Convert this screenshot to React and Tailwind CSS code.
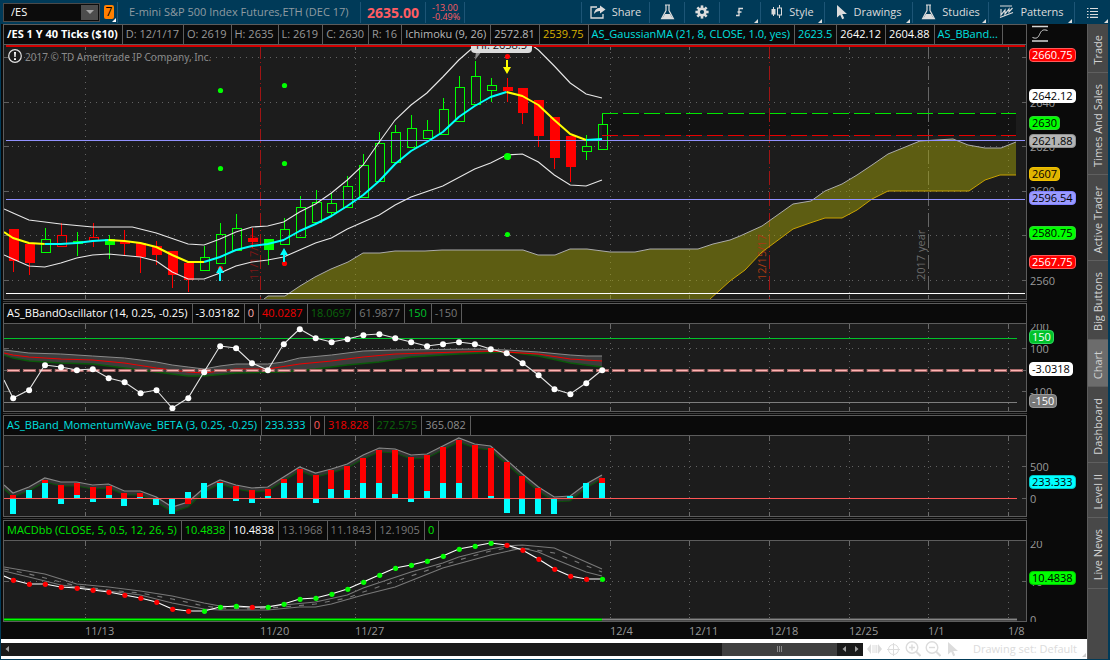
import React from "react";

const X = (i) => Math.round((13 + 15.92 * i) * 10) / 10;
const EDGE = -0.565;
const VERTICALS = [85, 260, 355, 610, 689, 769, 849, 928, 1008];

const pts = (series) => series.map(([i, y]) => `${X(i)},${y}`).join(" ");
const raw = (series) => series.map((p) => p.join(",")).join(" ");
const seq = (values, from = 0) => values.map((y, k) => [from + k, y]);

/* [kind, high, bodyTop, bodyBottom, low]; g/r = hollow, G/R = filled */
const CANDLES = [
  ["R", 229, 229, 260, 271], ["R", 244, 244, 262, 274], ["g", 228, 239, 252, 252], ["r", 223, 235, 246, 246],
  ["G", 232, 241, 243, 255], ["r", 223, 237, 240, 246], ["G", 235, 239, 244, 258], ["R", 230, 241, 243, 254],
  ["R", 243, 243, 256, 272], ["R", 241, 246, 254, 264], ["R", 251, 251, 274, 287], ["R", 263, 263, 279, 291],
  ["g", 246, 257, 270, 270], ["g", 223, 234, 263, 263], ["g", 214, 228, 250, 250], ["R", 228, 238, 241, 247],
  ["G", 239, 239, 249, 264], ["g", 218, 229, 244, 244], ["g", 196, 207, 237, 237], ["g", 190, 202, 222, 222],
  ["g", 193, 203, 212, 216], ["g", 176, 186, 207, 207], ["g", 154, 165, 197, 197], ["g", 132, 143, 181, 181],
  ["g", 125, 132, 162, 162], ["g", 115, 128, 147, 147], ["g", 120, 130, 138, 138], ["g", 98, 109, 134, 134],
  ["g", 76, 87, 121, 121], ["g", 61, 76, 104, 104], ["g", 78, 85, 90, 101], ["R", 78, 87, 90, 101],
  ["R", 88, 88, 112, 123], ["R", 100, 100, 135, 146], ["R", 117, 117, 157, 168], ["R", 136, 136, 166, 181],
  ["g", 135, 146, 151, 159], ["g", 113, 124, 149, 149],
];

const MA = [238, 243, 244, 244, 243, 241, 240, 241, 243, 247, 255, 262, 262, 257, 250, 246, 244, 240, 231, 224, 216, 206, 195, 181, 164, 151, 142, 132, 117, 106, 97, 92, 96, 105, 120, 134, 140, 139];
const UPPER = [[EDGE, 209], [0, 213], [1, 220], [3, 224], [5, 227], [7.5, 227], [9, 233], [11, 244], [12, 245], [13, 239], [14, 232], [15, 227], [16, 226], [17, 222], [18, 212], [19, 204], [20, 193], [21, 180], [22, 165], [23, 142], [24, 120], [25, 105], [26, 93], [27, 77], [28, 60], [29, 46], [30, 36], [31, 34], [32, 38], [33, 50], [34, 66], [35, 83], [36, 94], [37, 98]];
const LOWER = [[EDGE, 255], [0, 259], [1, 266], [2, 267], [3, 263], [4, 258], [5, 255], [6, 254], [8, 257], [9, 261], [10, 272], [11, 279], [12, 279], [13, 273], [14, 266], [15, 262], [16, 260], [17, 257], [18, 250], [19, 243], [20, 238], [21, 229], [22, 222], [23, 215], [24, 205], [25, 197], [27, 186], [29, 169], [30, 163], [31, 155], [32, 154], [33, 162], [34, 175], [35, 185], [36, 186], [37, 180]];
const CLOUD_TOP = [[264, 299], [268, 296], [285, 296], [300, 286], [315, 277], [331, 269], [348, 262], [363, 253], [380, 253], [395, 251], [425, 251], [442, 250], [523, 250], [538, 255], [555, 255], [570, 249], [587, 249], [610, 252], [635, 252], [650, 249], [698, 249], [713, 244], [730, 240], [740, 236], [762, 226], [793, 204], [811, 201], [825, 191], [842, 184], [857, 175], [872, 165], [888, 154], [920, 141], [953, 139], [968, 145], [985, 148], [1001, 148], [1016, 142]];
const CLOUD_BOTTOM = [[1016, 175], [1000, 175], [985, 180], [969, 191], [888, 191], [872, 199], [857, 210], [842, 218], [825, 218], [810, 223], [793, 229], [762, 252], [745, 270], [730, 281], [710, 299]];

const OSC = [398, 390, 365, 367, 370, 369, 378, 382, 393, 390, 408, 398, 372, 346, 348, 363, 370, 344, 329, 338, 342, 339, 335, 334, 338, 342, 346, 344, 342, 344, 349, 353, 363, 375, 389, 394, 383, 370];
const OSC_GRAY = [[EDGE, 350], [1, 353], [3, 354], [5, 356], [7, 358], [9, 362], [10, 365], [11, 367], [12, 369], [13, 366], [14, 364], [16, 364], [17, 362], [18, 358], [20, 355], [22, 351], [24, 350], [29, 349], [31, 350], [33, 352], [35, 355], [36, 356], [37, 356]];
const OSC_RED = [[EDGE, 353], [0, 355], [1, 357], [3, 359], [5, 360], [7, 363], [9, 368], [11, 372], [12, 373], [13, 371], [14, 369], [16, 369], [18, 364], [20, 361], [22, 357], [24, 354], [26, 353], [28, 352], [30, 351], [31, 352], [33, 354], [35, 359], [37, 361]];
const OSC_GREEN = [[EDGE, 355], [0, 358], [1, 361], [3, 363], [5, 364], [7, 368], [9, 372], [10, 374], [11, 376], [12, 376], [14, 373], [17, 372], [19, 369], [21, 365], [23, 362], [25, 357], [28, 354], [31, 352], [33, 356], [35, 363], [37, 367]];

/* [red end, cyan end]; 498 is the zero line */
const BARS = [
  [495, 514], [498, 490], [480, 483], [485, 504], [483, 495], [487, 502], [486, 495], [493, 506], [493, 497], [498, 505],
  [498, 514], [504, 492], [498, 483], [482, 483], [486, 501], [490, 503], [489, 496], [479, 483], [469, 483], [475, 503],
  [470, 489], [466, 490], [458, 483], [450, 483], [450, 494], [457, 502], [455, 491], [447, 483], [440, 483], [445, 499],
  [448, 496], [462, 513], [476, 514], [488, 514], [498, 514], [498, 496], [498, 483], [478, 483],
];
const WAVE = [493, 487, 478, 482, 482, 485, 484, 491, 491, 497, 507, 502, 488, 480, 485, 488, 487, 477, 467, 473, 469, 464, 455, 448, 449, 455, 454, 446, 438, 444, 446, 460, 474, 487, 497, 496, 484, 475];

const MACD = [580, 584, 584, 587, 588, 590, 592, 595, 598, 602, 609, 611, 611, 607, 606, 607, 607, 604, 599, 598, 594, 589, 582, 575, 568, 565, 561, 556, 549, 546, 543, 545, 550, 559, 569, 576, 579, 579];
const MACD_UP = [[EDGE, 567], [2, 574], [4, 584], [6, 587], [8, 591], [10, 596], [12, 603], [13, 606], [15, 608], [17, 605], [19, 602], [21, 595], [22, 588], [25, 572], [27, 563], [28, 557], [30, 549], [31, 546], [32, 545], [34, 548], [37, 569]];
const MACD_MID = [[EDGE, 569], [1, 574], [3, 582], [4, 586], [6, 590], [8, 593], [10, 599], [12, 606], [13, 608], [15, 609], [17, 607], [19, 604], [21, 598], [22, 592], [25, 576], [27, 565], [28, 560], [30, 551], [31, 548], [32, 548], [34, 553], [37, 572]];
const MACD_LOW = [[EDGE, 571], [1, 577], [3, 585], [5, 589], [8, 595], [10, 603], [12, 609], [13, 610], [16, 610], [18, 607], [19, 607], [20, 604], [22, 595], [24, 587], [27, 568], [30, 555], [32, 548], [33, 552], [34, 559], [36, 572], [37, 576]];
const isRed = (i) => i < 12 || i === 15 || (i > 30 && i < 37);

function Grid({ top, bottom, rows, special = {}, rowEnd = 1012 }) {
  return (
    <g shapeRendering="crispEdges" fill="none">
      {rows.map((y) => (
        <g key={y}>
          <line x1="12" x2={rowEnd} y1={y + 0.5} y2={y + 0.5} stroke="#636363" strokeDasharray="1 5" />
          <path d={`M4 ${y + 0.5}h5M1022 ${y + 0.5}h4`} stroke="#5f5f5f" />
        </g>
      ))}
      {VERTICALS.filter((x) => !special[x]).map((x) => (
        <line key={x} x1={x + 0.5} x2={x + 0.5} y1={top + 7} y2={bottom - 6} stroke="#636363" strokeDasharray="1 5" />
      ))}
      {VERTICALS.map((x) => (
        <path key={x} d={`M${x + 0.5} ${top}v5M${x + 0.5} ${bottom}v-4`} stroke="#6a6a6a" />
      ))}
      {Object.entries(special).map(([x, color]) => (
        <line key={x} x1={+x + 0.5} x2={+x + 0.5} y1={top} y2={bottom} stroke={color} strokeDasharray="14 3 1 3" />
      ))}
    </g>
  );
}

function PricePlot() {
  const ma = [[EDGE, 232], ...seq(MA)];
  const part = (a, b) => pts(ma.filter(([i]) => i >= a && i <= b));
  return (
    <svg viewBox="4 45 1022 254" preserveAspectRatio="none" className="block h-[254px] w-full bg-[#1c1c1c]" role="img" aria-label="Price chart">
      <rect x="602" y="113" width="414" height="22" fill="#121212" />
      <Grid top={45} bottom={299} rows={[57, 102, 146, 191, 235, 280]} special={{ 260: "#a01414", 769: "#a01414", 928: "#666666" }} />
      <polygon points={raw([...CLOUD_TOP, ...CLOUD_BOTTOM])} fill="#a5a509" fillOpacity="0.48" />
      <g fontFamily="'Open Sans', sans-serif" fontSize="11">
        <text transform="translate(258 280) rotate(-90)" fill="#7c1717">11/17/17</text>
        <text transform="translate(766 280) rotate(-90)" fill="#a83a12">12/15/17</text>
        <text transform="translate(925 280) rotate(-90)" fill="#6b6b6b">2017 year</text>
      </g>
      <polyline points={raw(CLOUD_TOP)} fill="none" stroke="#ababab" />
      <polyline points={raw(CLOUD_BOTTOM)} fill="none" stroke="#c9a200" />
      <g shapeRendering="crispEdges" fill="none">
        {CANDLES.map(([k, high, top, bottom, low], i) => {
          const c = k.toLowerCase() === "g" ? "#00ff00" : "#ff0000";
          const x = Math.round(X(i));
          const solid = k === "G" || k === "R";
          return (
            <g key={i}>
              <path d={`M${x + 0.5} ${high}V${top}M${x + 0.5} ${bottom}V${low + 0.5}`} stroke={c} />
              {solid ? (
                <rect x={x - 4} y={top} width="10" height={bottom - top + 1} fill={c} />
              ) : (
                <rect x={x - 3.5} y={top + 0.5} width="9" height={bottom - top} stroke={c} />
              )}
            </g>
          );
        })}
      </g>
      <g shapeRendering="crispEdges">
        <line x1="6" x2="1025" y1="140.5" y2="140.5" stroke="#9292ff" />
        <line x1="6" x2="1025" y1="199.5" y2="199.5" stroke="#9292ff" />
        <line x1="602" x2="1016" y1="113.5" y2="113.5" stroke="#00e600" strokeDasharray="16 5" />
        <line x1="602" x2="1016" y1="135.5" y2="135.5" stroke="#e60000" strokeDasharray="16 5" />
        <line x1="6" x2="1025" y1="293.5" y2="293.5" stroke="#ffffff" />
      </g>
      <polyline points={pts(UPPER)} fill="none" stroke="#e8e8e8" strokeWidth="1.1" />
      <polyline points={pts(LOWER)} fill="none" stroke="#e8e8e8" strokeWidth="1.1" />
      <g fill="none" strokeWidth="2" strokeLinejoin="round">
        <polyline points={part(-1, 2)} stroke="#ffff00" />
        <polyline points={part(2, 6)} stroke="#00ffff" />
        <polyline points={part(6, 12)} stroke="#ffff00" />
        <polyline points={part(12, 31)} stroke="#00ffff" />
        <polyline points={part(31, 36)} stroke="#ffff00" />
        <polyline points={part(36, 37)} stroke="#00ffff" />
      </g>
      <g fill="#00ff00">
        {[[220.5, 90.5, 2.6], [284.5, 85.5, 2.6], [220.5, 168.5, 2.6], [284.5, 163.5, 2.6], [507.5, 156.5, 3.6], [507.5, 234.5, 2.6]].map(([x, y, r]) => (
          <circle key={`${x}-${y}`} cx={x} cy={y} r={r} />
        ))}
      </g>
      <g fill="#ff0000">
        <circle cx="507.5" cy="56.5" r="2.6" />
        <circle cx="220.5" cy="268.5" r="2.6" />
        <circle cx="284.5" cy="263.5" r="2.6" />
      </g>
      <path d="M506 60h2v7h3l-4 7-4-7h3z" fill="#ffff00" />
      <path d="M219 281h2v-8h3l-4-7-4 7h3z" fill="#00ffff" />
      <path d="M283 262h2v-7h3l-4-7-4 7h3z" fill="#00ffff" />
      <path d="M476 51l-1 9 7-9z" fill="#8c8c8c" />
      <rect x="471" y="36" width="61" height="17" rx="4" fill="#dcdcdc" />
      <text x="476" y="49" fill="#111111" fontFamily="'Open Sans', sans-serif" fontSize="11">Hi: 2658.5</text>
      <rect x="6" y="45" width="1019" height="1" fill="#d40000" shapeRendering="crispEdges" />
      <rect x="6" y="46" width="465" height="1" fill="#d40000" shapeRendering="crispEdges" />
      <rect x="532" y="46" width="493" height="1" fill="#d40000" shapeRendering="crispEdges" />
      <circle cx="15" cy="56" r="6.3" fill="#1c1c1c" stroke="#e2e2e2" strokeWidth="1.2" />
      <path d="M14 52h2l-.4 5h-1.2zM14 58.3h2v1.8h-2z" fill="#ffffff" />
      <text x="25" y="61" fill="#8a8a8a" fontFamily="'Noto Sans', sans-serif" fontSize="10">2017 © TD Ameritrade IP Company, Inc.</text>
    </svg>
  );
}

function OscillatorPlot() {
  const line = [[EDGE, 380], ...seq(OSC)];
  return (
    <svg viewBox="4 324 1022 87" preserveAspectRatio="none" className="block h-[87px] w-full bg-[#1c1c1c]" role="img" aria-label="Oscillator chart">
      <Grid top={324} bottom={411} rows={[348, 391]} />
      <g shapeRendering="crispEdges">
        <path d="M4 370.5h5M1022 370.5h4" stroke="#5f5f5f" />
        <line x1="4" x2="1017" y1="338.5" y2="338.5" stroke="#00c22a" />
        <line x1="4" x2="1017" y1="402.5" y2="402.5" stroke="#7d7d7d" />
      </g>
      <polygon points={`${pts(OSC_GRAY)} ${pts([...OSC_GREEN].reverse())}`} fill="#3d3d3d" />
      <polyline points={pts(OSC_GRAY)} fill="none" stroke="#8a8a8a" />
      <polyline points={pts(OSC_GREEN)} fill="none" stroke="#0a5a0a" strokeWidth="1.3" />
      <polyline points={pts(OSC_RED)} fill="none" stroke="#ee0000" strokeWidth="1.2" />
      <line x1="7" x2="1023" y1="370.5" y2="370.5" stroke="#a86a6a" strokeWidth="3" strokeDasharray="13 2.92" />
      <line x1="8" x2="1023" y1="370.5" y2="370.5" stroke="#ffb4b4" strokeDasharray="11 4.92" />
      <polyline points={pts(line)} fill="none" stroke="#e6e6e6" strokeWidth="1.1" />
      {OSC.map((y, i) => (
        <circle key={i} cx={X(i) + 0.2} cy={y + 0.3} r="3" fill="#ffffff" />
      ))}
    </svg>
  );
}

function WavePlot() {
  const gray = [[EDGE, 485], ...seq(WAVE)];
  const green = gray.map(([i, y]) => [i, y + (y > 495 ? 5 : 4)]);
  return (
    <svg viewBox="4 436 1022 80" preserveAspectRatio="none" className="block h-[80px] w-full bg-[#1c1c1c]" role="img" aria-label="Momentum wave chart">
      <Grid top={436} bottom={516} rows={[466]} />
      <polygon points={`${pts(gray)} ${pts([...green].reverse())}`} fill="#333333" />
      <polyline points={pts(gray)} fill="none" stroke="#8a8a8a" strokeWidth="1.2" />
      <polyline points={pts(green)} fill="none" stroke="#0a500a" strokeWidth="1.2" />
      <g shapeRendering="crispEdges">
        {BARS.map(([r, c], i) => (
          <g key={i}>
            <rect x={Math.round(X(i)) - 3} y={Math.min(r, 498)} width="6" height={Math.abs(498 - r)} fill="#ff0000" />
            <rect x={Math.round(X(i)) - 3} y={Math.min(c, 498)} width="6" height={Math.abs(498 - c)} fill="#00ffff" />
          </g>
        ))}
        <path d="M1022 498.5h4" stroke="#5f5f5f" />
        <line x1="4" x2="1017" y1="498.5" y2="498.5" stroke="#ff5555" />
      </g>
    </svg>
  );
}

function MacdPlot() {
  const line = [[EDGE, 576], ...seq(MACD)];
  return (
    <svg viewBox="4 541 1022 80" preserveAspectRatio="none" className="block h-[80px] w-full bg-[#1c1c1c]" role="img" aria-label="MACD chart">
      <Grid top={541} bottom={621} rows={[581]} />
      <g fill="none" stroke="#787878" strokeWidth="1.1">
        <polyline points={pts(MACD_UP)} />
        <polyline points={pts(MACD_LOW)} />
        <polyline points={pts(MACD_MID)} strokeDasharray="5 8" />
      </g>
      <g shapeRendering="crispEdges">
        <rect x="4" y="618" width="598" height="3" fill="#008c00" />
        <rect x="4" y="619" width="598" height="1" fill="#00ff00" />
        <rect x="602" y="618" width="415" height="3" fill="#4a4a4a" />
        <rect x="602" y="619" width="415" height="1" fill="#868686" />
      </g>
      <polyline points={pts(line)} fill="none" stroke="#ffffff" strokeWidth="1.2" />
      {MACD.map((y, i) => (
        <circle key={i} cx={X(i) + 0.5} cy={y + 0.3} r="2.6" fill={isRed(i) ? "#ff0000" : "#00ff00"} />
      ))}
    </svg>
  );
}

function Header({ cells }) {
  return (
    <div className="flex h-5 items-stretch overflow-hidden border-b border-[#5c5c5c] bg-[#0a0a0a] text-[11px]">
      {cells.map(([text, color], i) => (
        <span key={i} className={`flex shrink-0 items-center whitespace-nowrap border-r border-[#5c5c5c] pl-[3px] pr-1 ${color}`}>
          {text}
        </span>
      ))}
    </div>
  );
}

/* Every label's y is the centre of its text, measured from the top of the plot. */
function Axis({ ticks, badges, icon }) {
  return (
    <div className="flex w-[60px] shrink-0 flex-col bg-[#0a0a0a]">
      <div className="h-[21px] pl-[5px] pt-px">{icon}</div>
      <div className="relative flex-1 overflow-hidden text-[11px] leading-4">
        {ticks.map(([text, y]) => (
          <span key={text} className="absolute left-[3px] text-[#999999]" style={{ top: y - 8 }}>{text}</span>
        ))}
        {badges.map(([text, y, color]) => (
          <span key={text} className={`absolute left-[2px] flex h-[14px] items-center rounded border px-[2px] ${color}`} style={{ top: y - 7 }}>{text}</span>
        ))}
      </div>
    </div>
  );
}

function Panel({ cells, ticks, badges, icon, children }) {
  return (
    <section className="flex">
      <div className="min-w-0 flex-1 border border-[#5c5c5c]">
        <Header cells={cells} />
        {children}
      </div>
      <Axis ticks={ticks} badges={badges} icon={icon} />
    </section>
  );
}

function Divider() {
  return (
    <div className="flex h-[3px] items-center pr-[60px]">
      <div className="h-px flex-1 bg-[#3c3c3c]" />
    </div>
  );
}

function Tool({ label, icon, width, menu, name }) {
  return (
    <button type="button" aria-label={name || label} className={`relative flex h-[21px] shrink-0 items-center justify-center gap-1.5 border-l border-[#1d5576] text-[11px] text-[#dcdcdc] ${width}`}>
      {icon}
      {label}
      {menu && <Corner className="absolute bottom-0 right-[2px]" fill="#dcdcdc" />}
    </button>
  );
}

function Corner({ className, fill }) {
  return (
    <svg width="4" height="4" className={className} aria-hidden="true">
      <path d="M4 0v4H0z" fill={fill} />
    </svg>
  );
}

const ShareIcon = (
  <svg width="16" height="14" viewBox="0 0 16 14" fill="none" stroke="#dcdcdc" strokeWidth="1.3">
    <path d="M7 2H1v11h12V9" />
    <path d="M10 0.5l5.5 4-5.5 4V6C7.500 6 5.500 7 4 9c.3-3.500 2.500-6 6-6.200z" fill="#dcdcdc" stroke="none" />
  </svg>
);
const FlaskIcon = (
  <svg width="15" height="16" viewBox="0 0 15 16">
    <path d="M5 1h5M6 1v5.500L1.600 14.600h11.800L9 6.500V1" fill="none" stroke="#dcdcdc" strokeWidth="1.2" />
    <path d="M5 10l-2.800 4.500h10.600L10 10z" fill="#dcdcdc" />
  </svg>
);
const GearIcon = (
  <svg width="14" height="14" viewBox="-7 -7 14 14">
    <g fill="#dcdcdc">
      {[0, 45, 90, 135].map((a) => (
        <rect key={a} x="-1.300" y="-6.600" width="2.600" height="13.200" transform={`rotate(${a})`} />
      ))}
      <circle r="4.600" />
    </g>
    <circle r="2.100" fill="#003a58" />
  </svg>
);
const StepIcon = (
  <svg width="10" height="10" viewBox="0 0 10 10" fill="none" stroke="#dcdcdc" strokeWidth="1.300">
    <path d="M1 8.500h3V1.500h4M2.500 5h4" />
  </svg>
);
const CandleIcon = (
  <svg width="12" height="14" viewBox="0 0 12 14" fill="none" stroke="#dcdcdc">
    <path d="M2.500 2v9" />
    <rect x="1" y="4.500" width="3" height="4.500" fill="#dcdcdc" />
    <path d="M8.500 0v3M8.500 10v3" />
    <rect x="6.500" y="3" width="4" height="7" />
  </svg>
);
const CursorIcon = (
  <svg width="12" height="15" viewBox="0 0 12 15" fill="#dcdcdc">
    <path d="M1 0v12.500l3.200-2.800 2 4.500 2-.9-2-4.300H11z" />
  </svg>
);
const PatternIcon = (
  <svg width="15" height="14" viewBox="0 0 15 14" fill="none" stroke="#dcdcdc" strokeWidth="1.200">
    <path d="M1 1h12M1 12.500L14 7.500M2 4v6l4-5v4l4-5v3l3.500-4" />
  </svg>
);
const ListIcon = (
  <svg width="11" height="11" viewBox="0 0 11 11" stroke="#dcdcdc" strokeWidth="1.200">
    <path d="M0 1.500h1.500M3 1.500h8M0 4.500h1.500M3 4.500h8M0 7.500h1.500M3 7.500h8M0 10.300h1.500M3 10.300h8" />
  </svg>
);
const CurveIcon = (
  <svg width="16" height="17" viewBox="0 0 16 17" fill="none" stroke="#d6d6d6">
    <path d="M0 1.500h16M0 16h16" strokeWidth="1.400" />
    <path d="M0.500 12.500c5 2 6-1 7.500-4S11 4 15.500 5.500" />
  </svg>
);

function Toolbar() {
  return (
    <header className="flex h-6 items-center bg-[#003a58] pl-[3px]">
      <div className="relative flex h-[19px] w-[97px] shrink-0 border border-[#4a4a4a] bg-[#0c0c0c]">
        <label htmlFor="symbol" className="sr-only">Symbol</label>
        <select id="symbol" className="w-full appearance-none bg-transparent pl-[7px] text-[11px] leading-4 text-white outline-none">
          <option>/ES</option>
        </select>
        <span className="pointer-events-none absolute inset-y-px right-px flex w-[17px] items-center justify-center bg-[#4d4d4d]">
          <svg width="8" height="4" aria-hidden="true"><path d="M0 0h8L4 4z" fill="#a5a5a5" /></svg>
        </span>
      </div>
      <button type="button" aria-label="Link colour 7" className="relative ml-1 mr-[3px] flex h-[14px] w-[10px] shrink-0 items-center justify-center rounded-[2px] bg-[#ff8000] text-[12px] text-black">
        7
        <Corner className="absolute -bottom-[3px] -right-[2px]" fill="#ffffff" />
      </button>
      <h1 className="flex h-[21px] w-[243px] shrink-0 items-center whitespace-nowrap border-l border-[#1d5576] pl-[11px] text-[11px] text-[#8f9ba1]">
        E-mini S&amp;P 500 Index Futures,ETH (DEC 17)
      </h1>
      <div className="flex h-[21px] w-[65px] shrink-0 items-center border-l border-[#1d5576] pl-1.5 text-[14px] font-bold text-[#ff5c62]">2635.00</div>
      <div className="flex h-[21px] w-10 shrink-0 flex-col justify-center border-l border-r border-[#1d5576] pl-1.5 text-[9px] leading-[9px] text-[#ff5c62]">
        <span>-13.00</span>
        <span>-0.49%</span>
      </div>
      <div className="flex-1" />
      <Tool label="Share" icon={ShareIcon} width="w-[68px]" />
      <Tool name="Products" icon={FlaskIcon} width="w-[35px]" />
      <Tool name="Settings" icon={GearIcon} width="w-[35px]" />
      <Tool name="Chart mode" icon={StepIcon} width="w-[41px]" menu />
      <Tool label="Style" icon={CandleIcon} width="w-16" menu />
      <Tool label="Drawings" icon={CursorIcon} width="w-[88px]" menu />
      <Tool label="Studies" icon={FlaskIcon} width="w-[76px]" menu />
      <Tool label="Patterns" icon={PatternIcon} width="w-[86px]" menu />
      <Tool name="More" icon={ListIcon} width="w-9" menu />
    </header>
  );
}

const TABS = [
  ["Trade", "h-[49px]"], ["Times And Sales", "h-[102px]"], ["Active Trader", "h-[86px]"], ["Big Buttons", "h-[79px]"],
  ["Chart", "h-[47px]"], ["Dashboard", "h-[76px]"], ["Level II", "h-[55px]"], ["Live News", "h-[71px]"],
];

function SideTabs() {
  return (
    <nav className="mr-[2px] flex w-[21px] shrink-0 flex-col border-l border-[#5c5c5c] bg-[#484848]">
      {TABS.map(([name, height]) => (
        <button key={name} type="button" className={`flex w-full items-center justify-center border-b border-[#5f5f5f] pt-1 text-[11px] leading-4 text-[#d2d2d2] ${height} ${name === "Chart" ? "bg-[#6c6c6c]" : ""}`}>
          <span className="rotate-180 whitespace-nowrap [writing-mode:vertical-rl]">{name}</span>
        </button>
      ))}
    </nav>
  );
}

const DATES = ["11/13", "11/20", "11/27", "12/4", "12/11", "12/18", "12/25", "1/1", "1/8"];

function DateAxis() {
  return (
    <div className="h-[17px] bg-[#0a0a0a] pl-px pr-[61px]">
      <div className="relative h-full text-[11px] leading-[18px] text-[#999999]">
        {DATES.map((d, i) => (
          <span key={d} className="absolute" style={{ left: `${((VERTICALS[i] - 4) / 1022) * 100}%` }}>{d}</span>
        ))}
      </div>
    </div>
  );
}

function Arrow({ flip }) {
  return (
    <svg width="4" height="6" viewBox="0 0 4 6" className={flip ? "rotate-180" : ""} aria-hidden="true">
      <path d="M4 0v6L0.500 3z" fill="#a0a0a0" />
    </svg>
  );
}

function Footer() {
  return (
    <footer className="flex h-5 items-center bg-white">
      <div className="flex h-[13px] flex-1 items-center bg-[#1a1a1a]">
        <button type="button" aria-label="Scroll left" className="flex h-full w-3 items-center justify-center"><Arrow /></button>
        <div className="flex h-full flex-1 justify-end">
          <div className="flex h-full w-[14%] items-center justify-center gap-px bg-[#404040]">
            <i className="h-1.5 w-px bg-[#8a8a8a]" />
            <i className="h-1.5 w-px bg-[#8a8a8a]" />
            <i className="h-1.5 w-px bg-[#8a8a8a]" />
          </div>
        </div>
        <button type="button" aria-label="Step left" className="flex h-full w-[13px] items-center justify-center"><Arrow /></button>
        <button type="button" aria-label="Step right" className="flex h-full w-[13px] items-center justify-center"><Arrow flip /></button>
      </div>
      <div className="flex w-[224px] shrink-0 items-center text-[#dcdcdc]">
        <button type="button" aria-label="Pan" className="flex w-5 justify-center pl-[2px]">
          <svg width="15" height="10" viewBox="0 0 15 10" fill="#dcdcdc"><path d="M4 0v10L0 5zM11 0v10l4-5zM5.500 1h1v8h-1zM7.500 1h1v8h-1zM9.300 1h1v8h-1z" /></svg>
        </button>
        <button type="button" aria-label="Crosshair" className="flex w-5 justify-center">
          <svg width="13" height="13" viewBox="0 0 13 13" fill="none" stroke="#dcdcdc"><circle cx="6.500" cy="6.500" r="5" /><path d="M6.500 0v13M0 6.500h13" /></svg>
        </button>
        {[["Zoom in", "M4 6.500h6M7 3.500v6"], ["Zoom out", "M4 6.500h6"]].map(([name, d]) => (
          <button key={name} type="button" aria-label={name} className="flex w-5 justify-center">
            <svg width="16" height="16" viewBox="0 0 16 16" fill="none" stroke="#dcdcdc" strokeWidth="1.400"><circle cx="7" cy="6.500" r="5.800" /><path d={d} /><path d="M11 10.500l4.500 4.500" strokeWidth="2" /></svg>
          </button>
        ))}
        <button type="button" aria-label="Pointer" className="flex w-5 justify-center">
          <svg width="12" height="15" viewBox="0 0 12 15" fill="#dcdcdc"><path d="M1 0v12.500l3.200-2.800 2 4.500 2-.9-2-4.300H11z" /></svg>
        </button>
        <button type="button" className="relative ml-2.5 flex-1 whitespace-nowrap text-left text-[11px] leading-4">
          Drawing set: Default
          <Corner className="absolute bottom-0 right-px" fill="#cccccc" />
        </button>
      </div>
    </footer>
  );
}

const GRAY = "text-[#999999]";
const DIM = "text-[#787878]";
const CYAN = "text-[#00e0e0]";
const WHITE = "text-white";

export default function App() {
  return (
    <div className="flex min-h-screen flex-col bg-[#003a58] font-['Open_Sans','Noto_Sans',sans-serif]">
      <Toolbar />
      <div className="flex flex-1 pb-px pl-px">
        <main className="flex min-w-0 flex-1 flex-col bg-[#0a0a0a]">
          <div className="pl-[2px]">
            <Panel
              cells={[
                [<b key="s">/ES 1 Y 40 Ticks ($10)</b>, WHITE], ["D: 12/1/17", GRAY], ["O: 2619", GRAY], ["H: 2635", GRAY], ["L: 2619", GRAY], ["C: 2630", GRAY], ["R: 16", GRAY],
                ["Ichimoku (9, 26)", "text-[#b8b8b8]"], ["2572.81", "text-[#b8b8b8]"], ["2539.75", "text-[#d8b000]"],
                ["AS_GaussianMA (21, 8, CLOSE, 1.0, yes)", CYAN], ["2623.5", CYAN], ["2642.12", WHITE], ["2604.88", WHITE], ["AS_BBand...", CYAN],
              ]}
              ticks={[["2640", 58], ["2620", 102], ["2600", 146], ["2580", 191], ["2560", 236]]}
              badges={[
                ["2660.75", 10, "border-[#ff5a5a] bg-[#ff0000] text-white"],
                ["2642.12", 51, "border-white bg-white text-black"],
                ["2630", 78, "border-[#30d030] bg-[#00ff00] text-black"],
                ["2621.88", 96, "border-[#8f8f8f] bg-[#b4b4b4] text-black"],
                ["2607", 129, "border-[#f0c000] bg-[#e0b400] text-black"],
                ["2596.54", 153, "border-[#8080ff] bg-[#9a9aff] text-black"],
                ["2580.75", 188, "border-[#30d030] bg-[#00ff00] text-black"],
                ["2567.75", 217, "border-[#ff5a5a] bg-[#ff0000] text-white"],
              ]}
              icon={CurveIcon}
            >
              <PricePlot />
            </Panel>
            <Divider />
            <Panel
              cells={[
                ["AS_BBandOscillator (14, 0.25, -0.25)", WHITE], ["-3.03182", WHITE], ["0", "text-[#ffb0b0]"], ["40.0287", "text-[#ee0000]"],
                ["18.0697", "text-[#0a640a]"], ["61.9877", DIM], ["150", "text-[#00c22a]"], ["-150", DIM],
              ]}
              ticks={[["200", 3], ["100", 25], ["-100", 68]]}
              badges={[
                ["150", 13, "border-[#30d860] bg-[#00c22a] text-white"],
                ["-3.0318", 45, "border-white bg-white text-black"],
                ["-150", 77, "border-[#999999] bg-[#777777] text-white"],
              ]}
            >
              <OscillatorPlot />
            </Panel>
            <Divider />
            <Panel
              cells={[
                ["AS_BBand_MomentumWave_BETA (3, 0.25, -0.25)", CYAN], ["233.333", CYAN], ["0", "text-[#ff5c5c]"],
                ["318.828", "text-[#ee0000]"], ["272.575", "text-[#0a640a]"], ["365.082", "text-[#8c8c8c]"],
              ]}
              ticks={[["500", 31], ["0", 63]]}
              badges={[["233.333", 46, "border-[#00c8c8] bg-[#00ffff] text-black"]]}
            >
              <WavePlot />
            </Panel>
            <Divider />
            <Panel
              cells={[
                ["MACDbb (CLOSE, 5, 0.5, 12, 26, 5)", "text-[#00e600]"], ["10.4838", "text-[#00e600]"], ["10.4838", WHITE],
                ["13.1968", DIM], ["11.1843", DIM], ["12.1905", DIM], ["0", "text-[#00e600]"],
              ]}
              ticks={[["20", 3], ["10", 41], ["0", 79]]}
              badges={[["10.4838", 37, "border-[#00c800] bg-[#00ff00] text-black"]]}
            >
              <MacdPlot />
            </Panel>
            <DateAxis />
          </div>
          <Footer />
        </main>
        <SideTabs />
      </div>
    </div>
  );
}
